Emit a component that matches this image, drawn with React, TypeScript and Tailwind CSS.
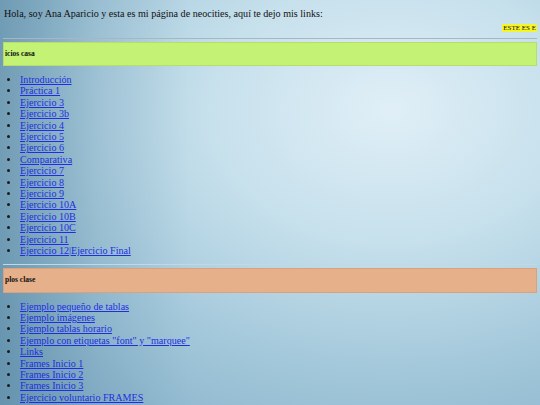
import React from 'react';

const casa = [
  'Introducción',
  'Práctica 1',
  'Ejercicio 3',
  'Ejercicio 3b',
  'Ejercicio 4',
  'Ejercicio 5',
  'Ejercicio 6',
  'Comparativa',
  'Ejercicio 7',
  'Ejercicio 8',
  'Ejercicio 9',
  'Ejercicio 10A',
  'Ejercicio 10B',
  'Ejercicio 10C',
  'Ejercicio 11',
  'Ejercicio 12|Ejercicio Final',
];

const clase = [
  'Ejemplo pequeño de tablas',
  'Ejemplo imágenes',
  'Ejemplo tablas horario',
  'Ejemplo con etiquetas "font" y "marquee"',
  'Links',
  'Frames Inicio 1',
  'Frames Inicio 2',
  'Frames Inicio 3',
  'Ejercicio voluntario FRAMES',
];

function LinkList({ items }: { items: string[] }) {
  return (
    <ul className="list-disc pl-[17px] mt-[8px] text-[10.1px] leading-[11.4px]">
      {items.map(item => (
        <li key={item} className="marker:text-[#1a1a1a]">
          <a href="#" className="text-[#1f2ee0] underline">{item}</a>
        </li>
      ))}
    </ul>
  );
}

export default function App() {
  return (
    <div
      className="w-[540px] h-[405px] overflow-hidden px-[3px] text-[#111] bg-[linear-gradient(to_right,rgba(60,110,140,0.45)_0%,rgba(60,110,140,0.15)_18%,rgba(60,110,140,0)_35%),radial-gradient(ellipse_520px_380px_at_390px_110px,#e0eff7_0%,#c6e0ec_35%,#a2c7da_70%,#88b2ca_100%)]"
      style={{ fontFamily: '"Liberation Serif", "Times New Roman", serif' }}
    >
      <p className="pt-[7px] pl-[1px] text-[10.1px] leading-[13px]">
        Hola, soy Ana Aparicio y esta es mi página de neocities, aquí te dejo mis links:
      </p>
      <div className="flex justify-end mt-[4px]">
        <span className="bg-[#f5f52a] text-[7px] leading-[8px] px-[1px]">ESTE ES E</span>
      </div>
      <hr className="mt-[6px] border-t border-[#a8b6bf]" />
      <div className="mt-[3px] h-[24px] bg-[#c4f274] border border-[#b5df6a] flex items-center">
        <span className="text-[7.5px] font-bold pl-[1px]">icios casa</span>
      </div>
      <LinkList items={casa} />
      <hr className="mt-[7px] border-t border-[#c5d8e2]" />
      <div className="mt-[3px] h-[25px] bg-[#e6b08a] border border-[#d9a27d] flex items-center">
        <span className="text-[7.5px] font-bold pl-[1px]">plos clase</span>
      </div>
      <LinkList items={clase} />
    </div>
  );
}
